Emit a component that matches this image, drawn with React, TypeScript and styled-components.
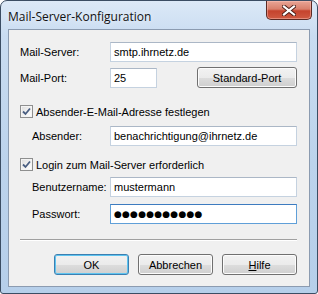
import React from 'react';
import styled, { createGlobalStyle } from 'styled-components';

const GlobalStyle = createGlobalStyle`
  html, body {
    margin: 0;
    padding: 0;
    background: #ffffff;
  }
  * {
    box-sizing: border-box;
  }
`;

const Window = styled.div`
  width: 318px;
  height: 294px;
  border: 1px solid #3b4d63;
  border-radius: 7px 7px 3px 3px;
  background: linear-gradient(180deg, #dce9f7 0%, #c9dcf1 12%, #bcd3ec 55%, #b6cfea 100%);
  display: flex;
  flex-direction: column;
  overflow: hidden;
  font-family: 'Liberation Sans', Arial, sans-serif;
`;

const TitleBar = styled.div`
  height: 28px;
  display: flex;
  align-items: flex-start;
  justify-content: space-between;
  padding-left: 7px;
`;

const Title = styled.div`
  font-family: 'Open Sans', 'Noto Sans', sans-serif;
  font-size: 12px;
  color: #111;
  margin-top: 7px;
  text-shadow: 0 0 6px rgba(255, 255, 255, 0.9);
`;

const CloseButton = styled.div`
  width: 46px;
  height: 19px;
  margin-right: 5px;
  border: 1px solid #5b2a24;
  border-top: none;
  border-radius: 0 0 5px 5px;
  background: linear-gradient(180deg, #e8a596 0%, #d8806c 45%, #c5432d 55%, #cf5a42 100%);
  box-shadow: inset 0 0 0 1px rgba(255, 200, 190, 0.45);
  display: flex;
  align-items: center;
  justify-content: center;
`;

const Client = styled.div`
  flex: 1;
  margin: 0 7px 6px 7px;
  border: 1px solid #8b9bb0;
  background: #f0f0f0;
  padding: 12px 12px 0 11px;
  display: flex;
  flex-direction: column;
  font-size: 11px;
  color: #000;
`;

const Row = styled.div<{ $indent?: boolean; $gap: number }>`
  display: grid;
  grid-template-columns: ${p => (p.$indent ? '78px' : '90px')} 1fr;
  align-items: center;
  margin-top: ${p => p.$gap}px;
  padding-left: ${p => (p.$indent ? 12 : 0)}px;
`;

const Label = styled.label`
  white-space: nowrap;
`;

const TextBox = styled.div<{ $focused?: boolean; $width?: number }>`
  height: 20px;
  width: ${p => (p.$width ? `${p.$width}px` : '100%')};
  background: #fff;
  border: 1px solid ${p => (p.$focused ? '#5f9fd8' : '#c5d2e0')};
  border-top-color: ${p => (p.$focused ? '#3d7bbf' : '#abb7c6')};
  padding: 0 3px;
  display: flex;
  align-items: center;
  white-space: nowrap;
  overflow: hidden;
`;

const PortLine = styled.div`
  display: flex;
  align-items: center;
  justify-content: space-between;
`;

const Dots = styled.span`
  font-family: 'DejaVu Sans', sans-serif;
  font-size: 9px;
  letter-spacing: 0.2px;
  color: #000;
`;

const CheckRow = styled.div<{ $gap: number }>`
  display: flex;
  align-items: center;
  gap: 3px;
  margin-top: ${p => p.$gap}px;
`;

const CheckBox = styled.div`
  width: 13px;
  height: 13px;
  border: 1px solid #8e8f8f;
  background: linear-gradient(135deg, #dcdcdc 0%, #f4f4f4 60%, #ffffff 100%);
  box-shadow: inset 0 0 0 1px #f4f4f4;
  display: flex;
  align-items: center;
  justify-content: center;
`;

const Separator = styled.div`
  margin-top: 15px;
  height: 2px;
  border-top: 1px solid #a0a0a0;
  border-bottom: 1px solid #ffffff;
`;

const ButtonBar = styled.div`
  margin-top: 13px;
  display: flex;
  justify-content: flex-end;
  gap: 9px;
`;

const Button = styled.button<{ $default?: boolean; $width: number }>`
  width: ${p => p.$width}px;
  height: 21px;
  padding: 0;
  font-family: 'Liberation Sans', Arial, sans-serif;
  font-size: 11px;
  color: #000;
  border: 1px solid ${p => (p.$default ? '#3c7fb1' : '#707070')};
  border-radius: 3px;
  background: linear-gradient(180deg, #f2f2f2 0%, #ebebeb 50%, #dddddd 51%, #cfcfcf 100%);
  box-shadow: inset 0 0 0 1px ${p => (p.$default ? '#5ec4f0' : '#fcfcfc')};
`;

const Hot = styled.span`
  text-decoration: underline;
`;

function CheckMark() {
  return (
    <svg width="9" height="9" viewBox="0 0 9 9">
      <path d="M1 4.5 L3.5 7 L8 1.5" fill="none" stroke="#4a5f82" strokeWidth="1.8" />
    </svg>
  );
}

function CloseGlyph() {
  return (
    <svg width="14" height="11" viewBox="0 0 14 11">
      <path d="M2 1.5 L12 9.5 M12 1.5 L2 9.5" stroke="#4a1d17" strokeWidth="4" strokeLinecap="square" />
      <path d="M2 1.5 L12 9.5 M12 1.5 L2 9.5" stroke="#ffffff" strokeWidth="2.2" strokeLinecap="square" />
    </svg>
  );
}

export default function App() {
  return (
    <>
      <GlobalStyle />
      <Window>
        <TitleBar>
          <Title>Mail-Server-Konfiguration</Title>
          <CloseButton>
            <CloseGlyph />
          </CloseButton>
        </TitleBar>
        <Client>
          <Row $gap={0}>
            <Label>Mail-Server:</Label>
            <TextBox>smtp.ihrnetz.de</TextBox>
          </Row>
          <Row $gap={5}>
            <Label>Mail-Port:</Label>
            <PortLine>
              <TextBox $width={47}>25</TextBox>
              <Button $width={100}>Standard-Port</Button>
            </PortLine>
          </Row>
          <CheckRow $gap={17}>
            <CheckBox>
              <CheckMark />
            </CheckBox>
            <span>Absender-E-Mail-Adresse festlegen</span>
          </CheckRow>
          <Row $indent $gap={8}>
            <Label>Absender:</Label>
            <TextBox>benachrichtigung@ihrnetz.de</TextBox>
          </Row>
          <CheckRow $gap={12}>
            <CheckBox>
              <CheckMark />
            </CheckBox>
            <span>Login zum Mail-Server erforderlich</span>
          </CheckRow>
          <Row $indent $gap={6}>
            <Label>Benutzername:</Label>
            <TextBox>mustermann</TextBox>
          </Row>
          <Row $indent $gap={7}>
            <Label>Passwort:</Label>
            <TextBox $focused>
              <Dots>{'●'.repeat(11)}</Dots>
            </TextBox>
          </Row>
          <Separator />
          <ButtonBar>
            <Button $default $width={75}>OK</Button>
            <Button $width={75}>Abbrechen</Button>
            <Button $width={75}>
              <Hot>H</Hot>ilfe
            </Button>
          </ButtonBar>
        </Client>
      </Window>
    </>
  );
}
